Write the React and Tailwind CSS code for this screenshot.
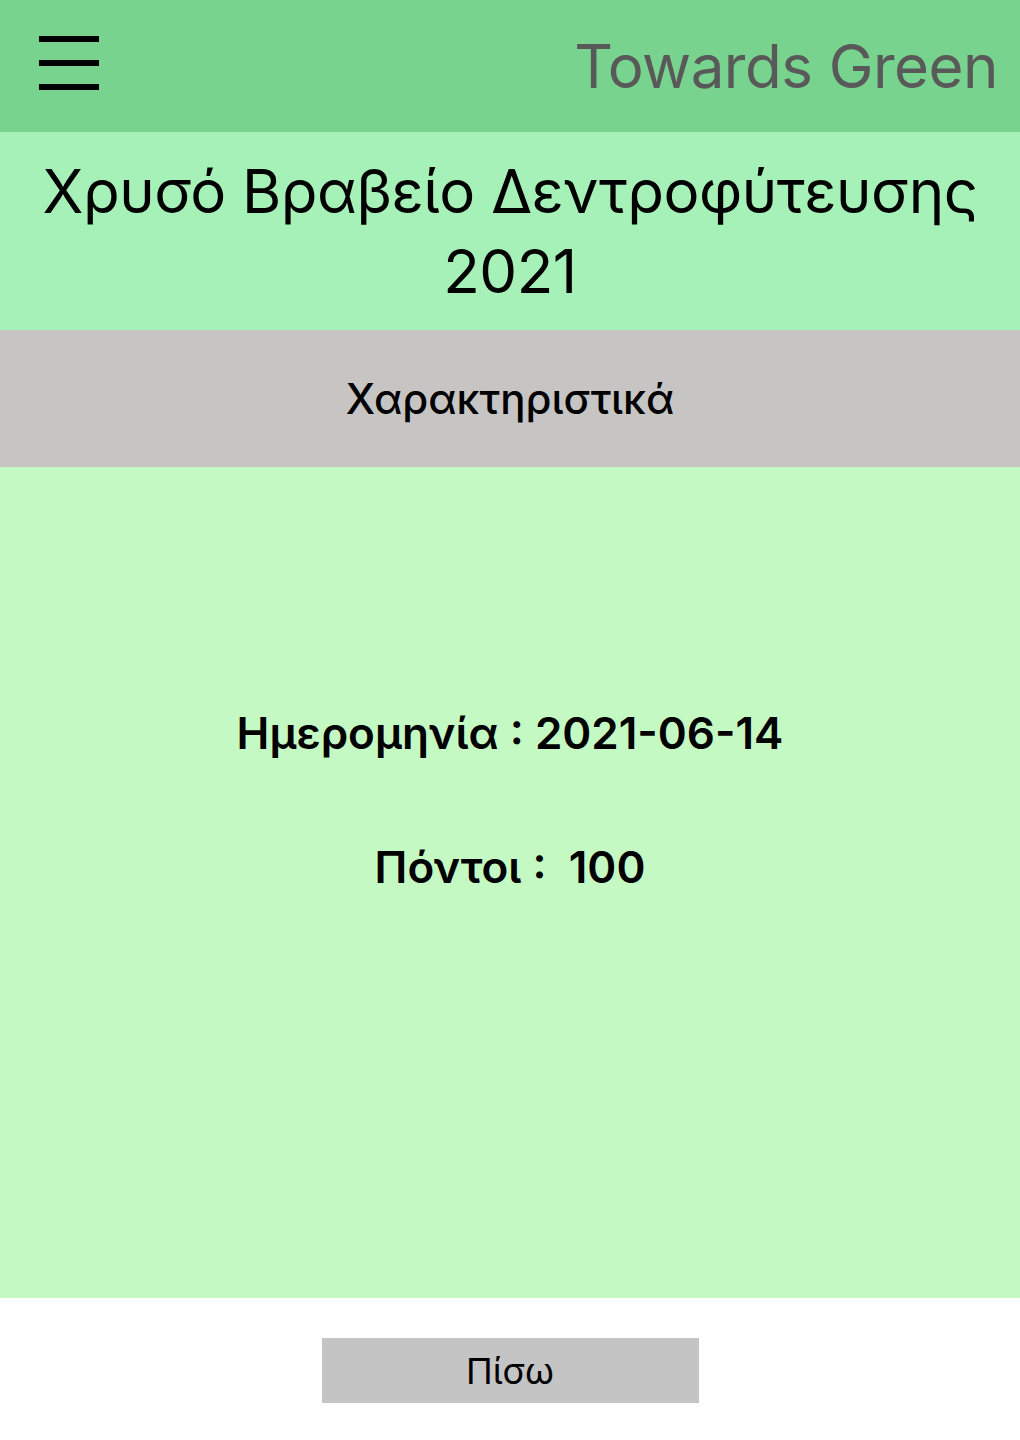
import React from 'react';

function App() {
  return (
    <div className="min-h-screen w-full flex flex-col bg-white" style={{ fontFamily: 'Inter, "Noto Sans", sans-serif' }}>
      {/* Header */}
      <header className="h-[132px] bg-[#77d38e] flex items-center justify-between pl-[39px] pr-[22px]">
        <button className="flex flex-col gap-[18px] w-[60px] mb-[6px]">
          <span className="block h-[6px] w-full bg-black" />
          <span className="block h-[6px] w-full bg-black" />
          <span className="block h-[6px] w-full bg-black" />
        </button>
        <span className="text-[60px] text-[#595959] tracking-[-0.5px] leading-none">Towards Green</span>
      </header>

      {/* Title */}
      <div className="h-[198px] bg-[#a6f1b8] flex items-center justify-center text-center px-4">
        <h1 className="text-[60px] leading-[80px] text-black tracking-[-0.5px]">
          Χρυσό Βραβείο Δεντροφύτευσης
          <br />
          2021
        </h1>
      </div>

      {/* Section label */}
      <div className="h-[137px] bg-[#c6c5c3] flex items-center justify-center">
        <h2 className="text-[42px] font-medium text-black">Χαρακτηριστικά</h2>
      </div>

      {/* Details */}
      <div className="h-[831px] bg-[#c5f9c4] flex flex-col items-center pt-[244px] gap-[90px]">
        <p className="text-[44px] font-semibold text-black leading-none">Ημερομηνία : 2021-06-14</p>
        <p className="text-[44px] font-semibold text-black leading-none">Πόντοι :&nbsp;&nbsp;100</p>
      </div>

      {/* Back button */}
      <div className="flex justify-center pt-[40px]">
        <button className="w-[377px] h-[65px] bg-[#c4c4c4] text-[36px] text-black flex items-center justify-center">
          Πίσω
        </button>
      </div>
    </div>
  );
}

export default App;
